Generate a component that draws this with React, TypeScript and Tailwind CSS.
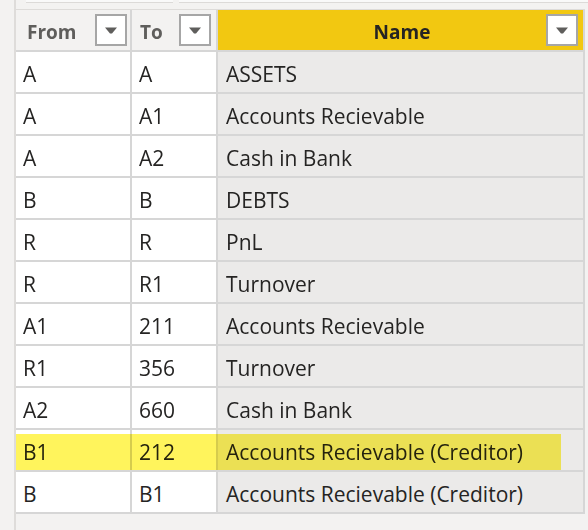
import React from "react";

type Row = { from: string; to: string; name: string; hl?: boolean };

const rows: Row[] = [
  { from: "A", to: "A", name: "ASSETS" },
  { from: "A", to: "A1", name: "Accounts Recievable" },
  { from: "A", to: "A2", name: "Cash in Bank" },
  { from: "B", to: "B", name: "DEBTS" },
  { from: "R", to: "R", name: "PnL" },
  { from: "R", to: "R1", name: "Turnover" },
  { from: "A1", to: "211", name: "Accounts Recievable" },
  { from: "R1", to: "356", name: "Turnover" },
  { from: "A2", to: "660", name: "Cash in Bank" },
  { from: "B1", to: "212", name: "Accounts Recievable (Creditor)", hl: true },
  { from: "B", to: "B1", name: "Accounts Recievable (Creditor)" },
];

function FilterButton() {
  return (
    <div className="w-[32px] h-[32px] border-2 border-[#a6a6a6] bg-white flex items-center justify-center shrink-0">
      <svg width="12" height="7" viewBox="0 0 12 7">
        <path d="M0 0.5 H12 L7 6.5 H5 Z" fill="#5f5e5c" />
      </svg>
    </div>
  );
}

export default function App() {
  const font = { fontFamily: '"Open Sans", "Noto Sans", sans-serif' };
  return (
    <div className="w-[588px] h-[530px] bg-[#f3f2f1] flex overflow-hidden" style={font}>
      <div className="w-[14px] shrink-0" />
      <div className="w-[2px] shrink-0 bg-[#dedcda]" />
      <div className="flex-1 flex flex-col">
        {/* clipped strip above the header */}
        <div className="h-[9px] flex items-start">
          <div className="w-[10px]" />
          <div className="w-[147px] h-[3px] bg-[#f9f9f9] border-b border-[#dcdad8]" />
          <div className="w-[6px]" />
          <div className="flex-1 h-[3px] bg-[#f9f9f9] border-b border-[#dcdad8]" />
        </div>
        <div className="h-[1px] bg-[#dddbd9] w-[569px]" />

        {/* header */}
        <div className="flex h-[42px]">
          <div className="w-[116px] border-r-2 border-b-2 border-[#d6d6d6] bg-[#f3f2f1] flex items-center justify-between pl-[11px] pr-[3px]">
            <span className="text-[19px] font-bold text-[#5f5e5c] pt-[4px]">From</span>
            <FilterButton />
          </div>
          <div className="w-[86px] border-r-2 border-b-2 border-[#d6d6d6] bg-[#f3f2f1] flex items-center justify-between pl-[8px] pr-[5px]">
            <span className="text-[19px] font-bold text-[#5f5e5c] pt-[4px]">To</span>
            <FilterButton />
          </div>
          <div className="w-[367px] border-r-2 border-b-2 border-[#d6d6d6] bg-[#f2c811] flex items-center pr-[5px]">
            <span className="flex-1 text-center text-[19px] font-bold text-[#252423] pt-[4px] pl-[40px]">Name</span>
            <FilterButton />
          </div>
        </div>

        {/* body */}
        {rows.map((r, i) => (
          <div key={i} className="relative flex h-[42px] text-[21px] text-[#252423]">
            <div className="w-[116px] border-r-2 border-b-2 border-[#d6d6d6] bg-white flex items-center pl-[7px] pt-[5px]">
              {r.from}
            </div>
            <div className="w-[86px] border-r-2 border-b-2 border-[#d6d6d6] bg-white flex items-center pl-[7px] pt-[5px]">
              {r.to}
            </div>
            <div className="w-[367px] border-r-2 border-b-2 border-[#d6d6d6] bg-[#ebeae9] flex items-center pl-[8px] pt-[5px] whitespace-nowrap">
              {r.name}
            </div>
            {r.hl && (
              <div className="absolute left-0 top-[4px] w-[545px] h-[36px] bg-[#fff45c] mix-blend-multiply" />
            )}
          </div>
        ))}
      </div>
    </div>
  );
}
